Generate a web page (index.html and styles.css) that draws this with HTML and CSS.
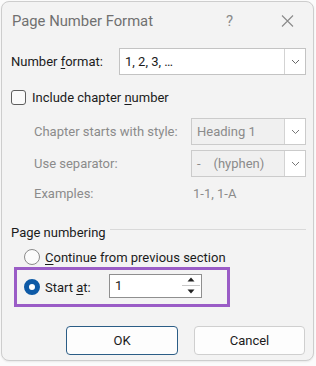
FILE: index.html
```html
<!DOCTYPE html>
<html>
<head>
<meta charset="utf-8">
<link rel="stylesheet" href="styles.css">
</head>
<body>
<div class="dialog">
  <div class="titlebar">
    <span class="title">Page Number Format</span>
    <span class="help">?</span>
    <svg class="close" width="13" height="12" viewBox="0 0 13 12"><path d="M1 0.5 L12 11.5 M12 0.5 L1 11.5" stroke="#8a8a8a" stroke-width="1.1" fill="none"/></svg>
  </div>

  <div class="row row-format">
    <span class="label">Number <u>f</u>ormat:</span>
    <div class="combo combo-wide">
      <span class="value">1, 2, 3, …</span>
      <span class="drop"><svg width="9" height="6" viewBox="0 0 9 6"><path d="M1 1 L4.5 4.5 L8 1" stroke="#666" stroke-width="1" fill="none"/></svg></span>
    </div>
  </div>

  <div class="row row-check">
    <span class="checkbox"></span>
    <span class="label">Include chapter <u>n</u>umber</span>
  </div>

  <div class="row row-chapter">
    <span class="label dim">Chapter starts with style:</span>
    <div class="combo combo-small disabled">
      <span class="value">Heading 1</span>
      <span class="drop"><svg width="9" height="6" viewBox="0 0 9 6"><path d="M1 1 L4.5 4.5 L8 1" stroke="#777" stroke-width="1" fill="none"/></svg></span>
    </div>
  </div>

  <div class="row row-sep">
    <span class="label dim">Use separator:</span>
    <div class="combo combo-small disabled">
      <span class="value">-&nbsp;&nbsp;&nbsp;&nbsp;(hyphen)</span>
      <span class="drop"><svg width="9" height="6" viewBox="0 0 9 6"><path d="M1 1 L4.5 4.5 L8 1" stroke="#777" stroke-width="1" fill="none"/></svg></span>
    </div>
  </div>

  <div class="row row-examples">
    <span class="label dim">Examples:</span>
    <span class="dim example">1-1, 1-A</span>
  </div>

  <div class="row row-group">
    <span class="label">Page numbering</span>
    <span class="rule"></span>
  </div>

  <div class="row row-radio">
    <span class="radio"></span>
    <span class="label"><u>C</u>ontinue from previous section</span>
  </div>

  <div class="highlight">
    <span class="radio checked"></span>
    <span class="label start">Start <u>a</u>t:</span>
    <div class="spin">
      <span class="value">1</span>
      <span class="spin-btns">
        <span class="spin-btn"><svg width="8" height="5" viewBox="0 0 8 5"><path d="M0.5 4.5 L4 0.5 L7.5 4.5 Z" fill="#222"/></svg></span>
        <span class="spin-btn"><svg width="8" height="5" viewBox="0 0 8 5"><path d="M0.5 0.5 L4 4.5 L7.5 0.5 Z" fill="#222"/></svg></span>
      </span>
    </div>
  </div>

  <div class="buttons">
    <button class="btn default">OK</button>
    <button class="btn">Cancel</button>
  </div>
</div>
</body>
</html>
```

FILE: styles.css
```css
html, body {
  margin: 0;
  padding: 0;
  background: #fbfbfb;
}
body {
  width: 316px;
  height: 366px;
  overflow: hidden;
  font-family: Roboto, "Noto Sans", sans-serif;
  font-size: 13px;
  color: #1b1b1b;
}
.dialog {
  margin: 1px 0 0 1px;
  width: 313px;
  height: 360px;
  box-sizing: border-box;
  border: 1px solid #cdcdcd;
  border-radius: 8px;
  background: #f3f3f3;
  padding: 0 7px 0 9px;
  display: flex;
  flex-direction: column;
  box-shadow: 0 1px 2px rgba(0,0,0,0.08);
}
u { text-decoration-thickness: 1px; text-underline-offset: 2px; }

.titlebar {
  height: 37px;
  display: flex;
  align-items: center;
  position: relative;
}
.title {
  font-size: 14.8px;
  color: #707070;
  flex: 1;
  margin-left: 1px;
}
.help {
  font-size: 15px;
  color: #8a8a8a;
  width: 55px;
}
.close {
  margin-right: 12px;
}

.row {
  display: flex;
  align-items: center;
}
.row-format { margin-top: 9px; height: 27px; justify-content: space-between; }
.row-check { margin-top: 12px; height: 20px; gap: 6px; }
.row-chapter { margin-top: 11px; height: 27px; padding-left: 23px; justify-content: space-between; }
.row-sep { margin-top: 5px; height: 27px; padding-left: 23px; justify-content: space-between; }
.row-examples { margin-top: 6px; height: 20px; padding-left: 23px; }
.row-examples .label { width: 159px; }
.row-group { margin-top: 19px; height: 20px; gap: 4px; }
.row-radio { margin-top: 5px; height: 20px; padding-left: 13px; gap: 5px; }

.dim { color: #8b8b8b; }

.combo {
  height: 27px;
  box-sizing: border-box;
  border: 1px solid #c3c3c3;
  background: #ffffff;
  display: flex;
  align-items: center;
}
.combo-wide { width: 187px; }
.combo-small { width: 115px; }
.combo.disabled { background: #f0f0f0; border-color: #cbcbcb; }
.combo .value { flex: 1; padding-left: 5px; }
.combo.disabled .value { color: #8b8b8b; }
.drop {
  width: 20px;
  height: 100%;
  border-left: 1px solid #d3d3d3;
  background: #ffffff;
  display: flex;
  align-items: center;
  justify-content: center;
}

.checkbox {
  width: 15px;
  height: 15px;
  box-sizing: border-box;
  border: 1px solid #5e5e5e;
  border-radius: 3px;
  background: #fafafa;
}

.rule {
  flex: 1;
  height: 1px;
  background: #d9d9d9;
  margin-top: -5px;
}

.radio {
  width: 16px;
  height: 16px;
  box-sizing: border-box;
  border: 1px solid #8a8a8a;
  border-radius: 50%;
  background: #fbfbfb;
  flex: none;
}
.radio.checked {
  border: 5px solid #0e5aa6;
  background: #ffffff;
}

.highlight {
  margin-left: 3px;
  width: 216px;
  height: 40px;
  box-sizing: border-box;
  border: 3px solid #9a5cc6;
  padding-left: 7px;
  display: flex;
  align-items: center;
}
.start { margin-left: 5px; width: 64px; }
.spin {
  width: 93px;
  height: 24px;
  margin-top: -3px;
  box-sizing: border-box;
  border: 1px solid #8f8f8f;
  background: #ffffff;
  display: flex;
  align-items: center;
}
.spin .value { flex: 1; padding-left: 5px; }
.spin-btns {
  width: 18px;
  height: 100%;
  display: flex;
  flex-direction: column;
  margin-right: 1px;
}
.spin-btn {
  flex: 1;
  display: flex;
  align-items: center;
  justify-content: center;
}
.spin-btn + .spin-btn { border-top: 1px solid #c8c8c8; }

.buttons {
  margin-top: 19px;
  display: flex;
  justify-content: flex-end;
  gap: 16px;
  padding-right: 1px;
}
.btn {
  font-family: Roboto, "Noto Sans", sans-serif;
  font-size: 13px;
  color: #1b1b1b;
  height: 29px;
  box-sizing: border-box;
  border: 1px solid #cfcfcf;
  border-radius: 4px;
  background: #fdfdfd;
  width: 111px;
  padding: 0;
}
.btn.default {
  width: 112px;
  border: 1.5px solid #2b5d86;
}
```
